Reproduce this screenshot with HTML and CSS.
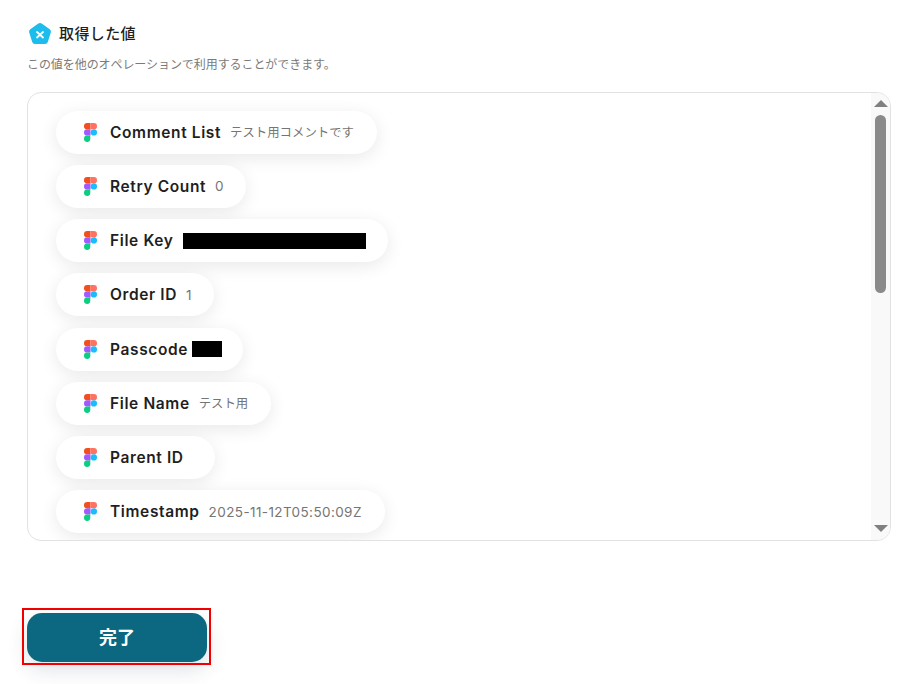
FILE: index.html
```html
<!DOCTYPE html>
<html>
<head>
    <title>取得した値</title>
    <meta charset="utf-8">
    <link rel="stylesheet" href="styles.css">
</head>
<body>
    <div class="heading">
        <svg class="logo" width="24" height="24" viewBox="0 0 24 24">
            <path d="M10.3 1.6a3 3 0 0 1 3.4 0l8 5.6a3 3 0 0 1 1.1 3.4l-3 9.3a3 3 0 0 1-2.8 2.1H7a3 3 0 0 1-2.8-2.1l-3-9.3a3 3 0 0 1 1.1-3.4z" fill="#1cbcec"/>
            <path d="M9 10l6 5.500M15 10l-6 5.500" stroke="#fff" stroke-width="1.800" stroke-linecap="round" fill="none"/>
        </svg>
        <h1>取得した値</h1>
    </div>
    <p class="note">この値を他のオペレーションで利用することができます。</p>

    <div class="box">
        <ul class="pills">
            <li class="pill pill-comment">
                <svg class="figma" width="13" height="19" viewBox="0 0 13 19"><use href="#figma"/></svg>
                <span class="name">Comment List</span><span class="val val-jp">テスト用コメントです</span>
            </li>
            <li class="pill pill-retry">
                <svg class="figma" width="13" height="19" viewBox="0 0 13 19"><use href="#figma"/></svg>
                <span class="name">Retry Count</span><span class="val">0</span>
            </li>
            <li class="pill pill-key">
                <svg class="figma" width="13" height="19" viewBox="0 0 13 19"><use href="#figma"/></svg>
                <span class="name">File Key</span><span class="redact redact-key"></span>
            </li>
            <li class="pill pill-order">
                <svg class="figma" width="13" height="19" viewBox="0 0 13 19"><use href="#figma"/></svg>
                <span class="name">Order ID</span><span class="val">1</span>
            </li>
            <li class="pill pill-pass">
                <svg class="figma" width="13" height="19" viewBox="0 0 13 19"><use href="#figma"/></svg>
                <span class="name">Passcode</span><span class="redact redact-pass"></span>
            </li>
            <li class="pill pill-file">
                <svg class="figma" width="13" height="19" viewBox="0 0 13 19"><use href="#figma"/></svg>
                <span class="name">File Name</span><span class="val val-jp">テスト用</span>
            </li>
            <li class="pill pill-parent">
                <svg class="figma" width="13" height="19" viewBox="0 0 13 19"><use href="#figma"/></svg>
                <span class="name">Parent ID</span>
            </li>
            <li class="pill pill-time">
                <svg class="figma" width="13" height="19" viewBox="0 0 13 19"><use href="#figma"/></svg>
                <span class="name">Timestamp</span><span class="val">2025-11-12T05:50:09Z</span>
            </li>
        </ul>
        <div class="scrollbar">
            <div class="arrow-up"></div>
            <div class="thumb"></div>
            <div class="arrow-down"></div>
        </div>
    </div>

    <div class="actions">
        <button class="done" type="button">完了</button>
        <div class="marker"></div>
    </div>

    <svg width="0" height="0" class="defs">
        <symbol id="figma" viewBox="0 0 13 19">
            <path d="M3.150 0H6.500V6.300H3.150a3.150 3.150 0 0 1 0-6.300z" fill="#f24e1e"/>
            <path d="M6.500 0h3.350a3.150 3.150 0 0 1 0 6.300H6.500z" fill="#ff7262"/>
            <path d="M3.150 6.300H6.500v6.300H3.150a3.150 3.150 0 0 1 0-6.300z" fill="#a259ff"/>
            <circle cx="9.850" cy="9.450" r="3.150" fill="#1abcfe"/>
            <path d="M3.150 12.600H6.300v3.150a3.150 3.150 0 1 1-3.150-3.150z" fill="#0acf83"/>
        </symbol>
    </svg>
</body>
</html>
```

FILE: styles.css
```css
body {
    margin: 0;
    min-height: 684px;
    padding: 22px 33px 0 27px;
    box-sizing: border-box;
    background-color: #fff;
    font-family: Inter, "Noto Sans CJK JP", sans-serif;
    color: #1f1f1f;
}

.heading {
    display: flex;
    align-items: center;
    gap: 7px;
    height: 24px;
    padding-left: 1px;
}

h1 {
    margin: 0;
    font-size: 15px;
    font-weight: 500;
    letter-spacing: 0.4px;
    line-height: 24px;
}

.note {
    margin: 10px 0 0;
    font-size: 12px;
    letter-spacing: -0.07px;
    line-height: 18px;
    color: #7a7a7a;
}

.box {
    display: flex;
    justify-content: space-between;
    height: 447px;
    margin-top: 18px;
    border: 1px solid #e2e2e2;
    border-radius: 14px;
    overflow: hidden;
}

.pills {
    list-style: none;
    margin: 0;
    padding: 17.550px 0 0 28px;
    display: flex;
    flex-direction: column;
    align-items: flex-start;
    gap: 11.270px;
}

.pill {
    display: flex;
    align-items: center;
    flex: none;
    height: 43px;
    padding-left: 28px;
    border-radius: 22px;
    background-color: #fff;
    box-shadow: 0 4px 18px rgba(0, 0, 0, 0.09);
    box-sizing: border-box;
}

.pill-comment { width: 321px; }
.pill-retry { width: 190px; }
.pill-key { width: 332px; }
.pill-order { width: 158px; }
.pill-pass { width: 187px; }
.pill-file { width: 215px; }
.pill-parent { width: 159px; }
.pill-time { width: 329px; }

.figma {
    flex: none;
    margin-right: 13px;
}

.name {
    font-size: 15.500px;
    font-weight: 600;
    letter-spacing: 0.62px;
    white-space: nowrap;
}

.val {
    margin-left: 9px;
    font-size: 13.500px;
    letter-spacing: 0.4px;
    color: #757575;
    white-space: nowrap;
}

.val-jp {
    font-size: 12.400px;
    letter-spacing: 0;
}

.redact {
    height: 16px;
    background-color: #000;
}

.redact-key {
    width: 183px;
    margin-left: 9px;
}

.redact-pass {
    width: 30px;
    margin-left: 4px;
}

.scrollbar {
    display: flex;
    flex-direction: column;
    align-items: center;
    flex: none;
    width: 19px;
    background-color: #f9f9f9;
}

.arrow-up {
    margin-top: 7px;
    border-left: 7px solid transparent;
    border-right: 7px solid transparent;
    border-bottom: 7px solid #808080;
}

.thumb {
    width: 11px;
    height: 178px;
    margin-top: 8px;
    border-radius: 6px;
    background-color: #8a8a8a;
}

.arrow-down {
    margin-top: auto;
    margin-bottom: 8px;
    border-left: 7px solid transparent;
    border-right: 7px solid transparent;
    border-top: 7px solid #808080;
}

.actions {
    position: relative;
    margin-top: 72px;
}

.done {
    display: block;
    width: 180px;
    height: 49px;
    padding: 0 0 4px;
    border: 0;
    border-radius: 15px;
    background-color: #0b6880;
    color: #fff;
    font-family: Inter, "Noto Sans CJK JP", sans-serif;
    font-size: 18px;
    font-weight: 700;
    box-shadow: 0 8px 20px rgba(30, 50, 80, 0.14);
}

.marker {
    position: absolute;
    left: -5px;
    top: -5px;
    width: 185px;
    height: 53px;
    border: 2px solid #f00000;
}

.defs {
    position: absolute;
}
```
